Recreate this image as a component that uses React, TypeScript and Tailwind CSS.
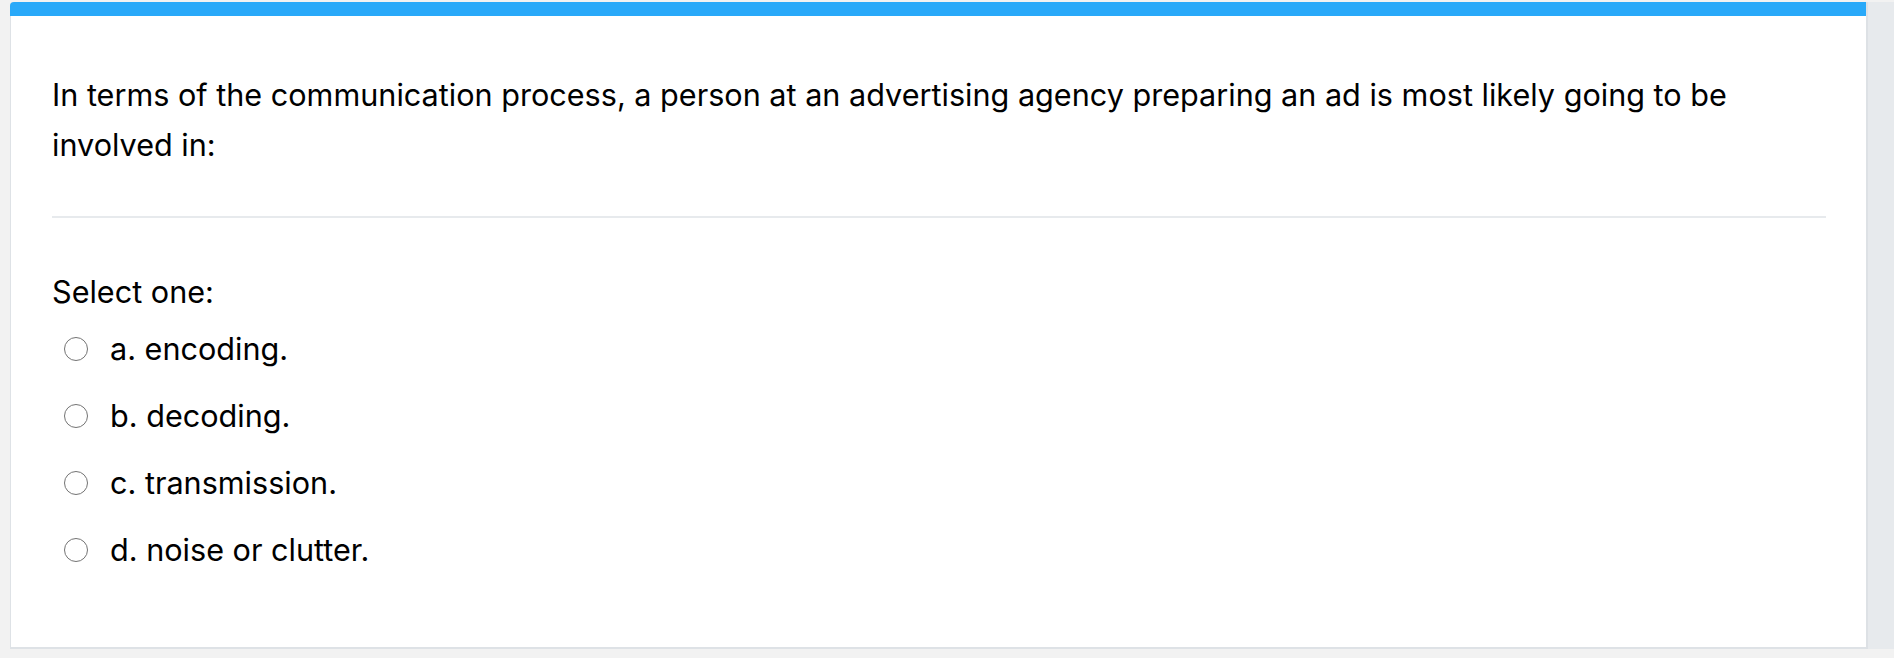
import React from 'react'

const options = ['a. encoding.', 'b. decoding.', 'c. transmission.', 'd. noise or clutter.']

function Radio() {
  return <span className="inline-block w-[24px] h-[24px] rounded-full border-[1.5px] border-[#737373] bg-white shrink-0" />
}

export default function App() {
  return (
    <div className="w-[1894px] h-[658px] bg-[#f2f2f2] pt-[2px] overflow-hidden" style={{ fontFamily: 'Inter, "Liberation Sans", sans-serif' }}>
      <div className="flex h-[647px]">
        <div className="ml-[10px] w-[1856px] bg-white border-l border-b-2 border-[#dee2e6] rounded-tl-[4px] flex flex-col">
          <div className="h-[14px] bg-[#29a9f9] rounded-tl-[4px] -ml-px" />
          <div className="pl-[41px] pr-[40px] text-black">
            <p className="text-[30.6px] leading-[50px] pt-[54px] pb-[46px]">
              In terms of the communication process, a person at an advertising agency preparing an ad is most likely going to be involved in:
            </p>
            <div className="border-t-2 border-[#e7eaed]" />
            <div className="text-[30.6px] leading-[49px] pt-[49px]">Select one:</div>
            <div className="flex flex-col gap-[18px] pt-[8px]">
              {options.map((o) => (
                <label key={o} className="flex items-center h-[49px] text-[30.6px]">
                  <span className="pl-[12px] pr-[22px] flex items-center"><Radio /></span>
                  <span>{o}</span>
                </label>
              ))}
            </div>
          </div>
        </div>
        <div className="w-[28px] bg-[#e7eaed] border-l-2 border-[#dde1e5]" />
      </div>
    </div>
  )
}
